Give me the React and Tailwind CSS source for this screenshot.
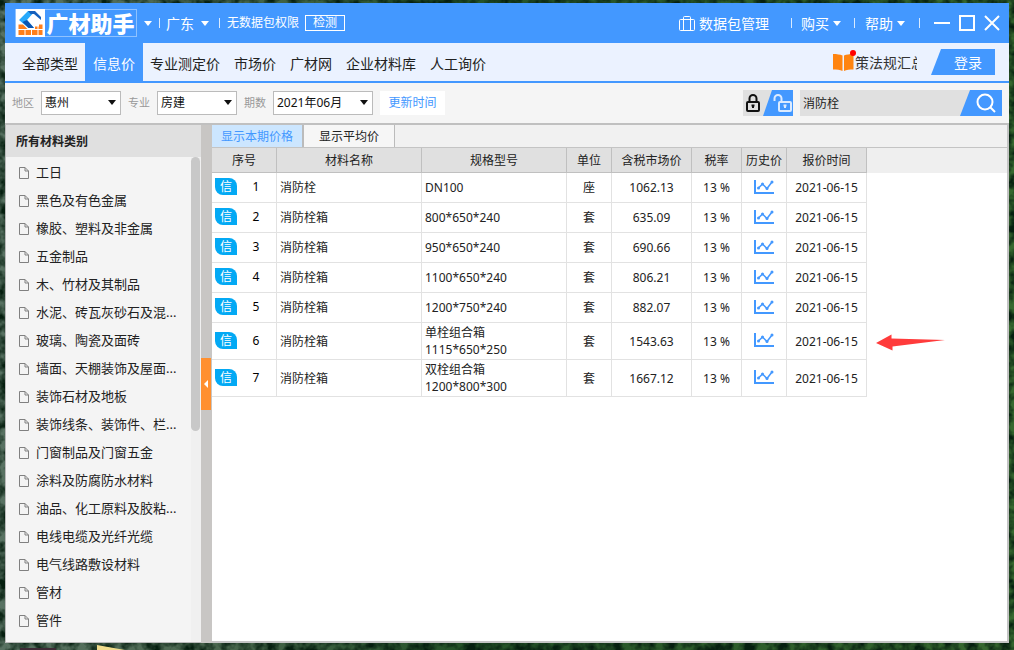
import React, { useState } from 'react';

const NAV_LINKS = ['全部类型', '信息价', '专业测定价', '市场价', '广材网', '企业材料库', '人工询价'];

const CATEGORIES = [
  '工日',
  '黑色及有色金属',
  '橡胶、塑料及非金属',
  '五金制品',
  '木、竹材及其制品',
  '水泥、砖瓦灰砂石及混...',
  '玻璃、陶瓷及面砖',
  '墙面、天棚装饰及屋面...',
  '装饰石材及地板',
  '装饰线条、装饰件、栏...',
  '门窗制品及门窗五金',
  '涂料及防腐防水材料',
  '油品、化工原料及胶粘...',
  '电线电缆及光纤光缆',
  '电气线路敷设材料',
  '管材',
  '管件',
];

const COLUMNS = [
  { title: '序号', width: 'w-[65px]' },
  { title: '材料名称', width: 'w-[145px]' },
  { title: '规格型号', width: 'w-[145px]' },
  { title: '单位', width: 'w-[45px]' },
  { title: '含税市场价', width: 'w-[80px]' },
  { title: '税率', width: 'w-[50px]' },
  { title: '历史价', width: 'w-[45px]' },
  { title: '报价时间', width: 'w-[80px]' },
];

const ROWS = [
  { name: '消防栓', spec: ['DN100'], unit: '座', price: '1062.13' },
  { name: '消防栓箱', spec: ['800*650*240'], unit: '套', price: '635.09' },
  { name: '消防栓箱', spec: ['950*650*240'], unit: '套', price: '690.66' },
  { name: '消防栓箱', spec: ['1100*650*240'], unit: '套', price: '806.21' },
  { name: '消防栓箱', spec: ['1200*750*240'], unit: '套', price: '882.07' },
  { name: '消防栓箱', spec: ['单栓组合箱', '1115*650*250'], unit: '套', price: '1543.63', marked: true },
  { name: '消防栓箱', spec: ['双栓组合箱', '1200*800*300'], unit: '套', price: '1667.12' },
];

const Caret = ({ className = '' }) => (
  <svg className={`shrink-0 ${className}`} width="8" height="5" viewBox="0 0 8 5" fill="currentColor" aria-hidden="true">
    <path d="M0 0h8L4 5z" />
  </svg>
);

const Divider = () => <span className="w-px h-2.5 bg-white/80 shrink-0" />;

const Logo = () => (
  <svg width="29" height="28" viewBox="0 0 29 28" aria-hidden="true">
    <rect width="29" height="28" fill="#fff" />
    <path d="M2.500 15.500H7l5 5h7v-5h7.500V26h-24z" fill="#ff7f1a" />
    <path d="M2 20.500h25M9 20.500V26M15.500 20.500V26M22 20.500V26M22 15.500v5" stroke="#fff" strokeWidth="1" />
    <path d="M12 2h7l-8 9 7 8h-5.500L3 11z" fill="#27a9fb" />
    <path d="M12 2h7l6 6v3l-7-6h-3.500z" fill="#1560bd" />
    <path d="M11 11l7 8h-5.500l-6-6z" fill="#0c55b0" />
    <path d="M16 14h7v3.500h-4.500z" fill="#fff" />
  </svg>
);

const DocIcon = () => (
  <svg className="shrink-0" width="10" height="12" viewBox="0 0 10 12" fill="none" stroke="#808080" aria-hidden="true">
    <path d="M.5.5h5.500l3.500 3.500v7.500h-9zM6 .5V4h3.500" />
  </svg>
);

const TrendIcon = () => (
  <svg className="mx-auto mb-0.5" width="20" height="14" viewBox="0 0 20 14" fill="none" stroke="#4398ff" aria-hidden="true">
    <path d="M1 0v13h19" strokeWidth="2" />
    <path d="M4.500 8l4-4 4.500 4.500L18 2" strokeWidth="1.500" />
    <g fill="#4398ff" stroke="none">
      <circle cx="4.500" cy="8" r="1.500" />
      <circle cx="8.500" cy="4" r="1.500" />
      <circle cx="13" cy="8.500" r="1.500" />
      <circle cx="18" cy="2" r="1.500" />
    </g>
  </svg>
);

const Wallpaper = () => (
  <svg className="absolute inset-0 w-full h-full" aria-hidden="true">
    <defs>
      <linearGradient id="forest">
        <stop offset="0" stopColor="#587262" />
        <stop offset="0.200" stopColor="#4c6850" />
        <stop offset="0.450" stopColor="#245228" />
        <stop offset="1" stopColor="#37682f" />
      </linearGradient>
      <filter id="leaves" x="0" y="0" width="100%" height="100%" colorInterpolationFilters="sRGB">
        <feTurbulence type="fractalNoise" baseFrequency="0.090" numOctaves="3" seed="4" />
        <feColorMatrix values="0 0 0 0 0.020  0 0 0 0 0.120  0 0 0 0 0.060  2.500 0 0 0 -0.800" />
      </filter>
    </defs>
    <rect width="100%" height="100%" fill="url(#forest)" />
    <rect width="100%" height="100%" filter="url(#leaves)" />
    <path d="M20 648h36v2H20z" fill="#3d2a35" />
    <path d="M97 645l28 5H97z" fill="#f0dc8c" />
  </svg>
);

const TitleBar = () => (
  <header className="flex items-center h-10 bg-[#4398ff] text-white pl-2.5 pr-[9px]">
    <a href="#" className="flex items-center h-7 border border-[#8fc2ff]">
      <Logo />
      <span className="w-[91px] text-center text-[22px] leading-6 font-black whitespace-nowrap">广材助手</span>
    </a>
    <Caret className="mx-[7px]" />
    <Divider />
    <button type="button" className="flex items-center gap-[7px] ml-1.5 mr-2.5 text-[14px]">
      广东
      <Caret />
    </button>
    <Divider />
    <span className="ml-[7px] text-[12px]">无数据包权限</span>
    <button type="button" className="ml-1.5 w-10 h-4 border border-white text-[12px] leading-[14px]">检测</button>

    <div className="ml-auto flex items-center text-[14px]">
      <button type="button" className="flex items-center gap-1 mr-[22px]">
        <svg width="16" height="15" viewBox="0 0 16 15" fill="none" stroke="currentColor" aria-hidden="true">
          <rect x=".5" y="3.500" width="15" height="11" rx="1" />
          <path d="M4.500 14.500V1.500a1 1 0 0 1 1-1h5a1 1 0 0 1 1 1v13" />
        </svg>
        数据包管理
      </button>
      <Divider />
      <button type="button" className="flex items-center gap-1 ml-[9px] mr-[13px]">
        购买
        <Caret />
      </button>
      <Divider />
      <button type="button" className="flex items-center gap-1 ml-2.5 mr-3.5">
        帮助
        <Caret />
      </button>
      <Divider />
    </div>
    <div className="flex items-center gap-[9px] ml-3.5">
      <button type="button" aria-label="最小化">
        <svg width="16" height="16" viewBox="0 0 16 16" stroke="#fff" strokeWidth="2"><path d="M0 8h16" /></svg>
      </button>
      <button type="button" aria-label="最大化">
        <svg width="16" height="16" viewBox="0 0 16 16" fill="none" stroke="#fff" strokeWidth="2"><path d="M1 1h14v14H1z" /></svg>
      </button>
      <button type="button" aria-label="关闭">
        <svg width="16" height="16" viewBox="0 0 16 16" stroke="#fff" strokeWidth="2"><path d="M1 1l14 14M15 1L1 15" /></svg>
      </button>
    </div>
  </header>
);

const NavBar = () => {
  const [active, setActive] = useState('信息价');

  return (
    <nav className="flex h-10 bg-[#ebf2ff] border-b-2 border-[#4398ff] pl-2.5 pr-3.5 text-[14px]">
      {NAV_LINKS.map((label) => (
        <a
          key={label}
          href="#"
          onClick={() => setActive(label)}
          className={`flex items-center pt-0.5 whitespace-nowrap ${
            active === label ? 'px-2 bg-[#4398ff] text-white' : 'px-[7px] text-[#222]'
          }`}
        >
          {label}
        </a>
      ))}
      <div className="ml-auto flex items-center">
        <a href="#" className="flex items-center">
          <span className="relative">
            <svg width="21" height="17" viewBox="0 0 21 17" fill="#ff8410" aria-hidden="true">
              <path d="M0 0c4 0 7 .5 9.500 1.500V17C7 15.800 4 15.500 0 15.500zM20.500 0c-4 0-7 .5-9.500 1.500V17c2.500-1.200 5.500-1.500 9.500-1.500z" />
            </svg>
            <span className="absolute -top-1 -right-0.5 w-1.5 h-1.5 rounded-full bg-[#f00]" />
          </span>
          <span className="ml-px w-[62px] overflow-hidden whitespace-nowrap text-[#333]">策法规汇总</span>
        </a>
        <button
          type="button"
          className="ml-3.5 w-16 h-[26px] pl-2.5 bg-[#4398ff] text-white [clip-path:polygon(10px_0,100%_0,100%_100%,0_100%)]"
        >
          登录
        </button>
      </div>
    </nav>
  );
};

const FilterSelect = ({ id, label, value, width }) => (
  <div className="flex items-center">
    <label htmlFor={id} className="mr-[7px] text-[11px] text-[#999]">{label}</label>
    <div className="relative">
      <select
        id={id}
        defaultValue={value}
        className={`block appearance-none h-6 pl-[3px] border border-[#bbb] bg-white text-[12px] text-[#111] ${width}`}
      >
        <option>{value}</option>
      </select>
      <Caret className="absolute right-[5px] top-[9px] pointer-events-none text-[#111]" />
    </div>
  </div>
);

const Toolbar = () => (
  <form className="flex items-center h-10 bg-[#f5f5f5] px-[7px]" onSubmit={(e) => e.preventDefault()}>
    <div className="flex items-center gap-[7px]">
      <FilterSelect id="area" label="地区" value="惠州" width="w-20" />
      <FilterSelect id="major" label="专业" value="房建" width="w-20" />
      <FilterSelect id="period" label="期数" value="2021年06月" width="w-[100px]" />
      <button type="button" className="w-[65px] h-6 bg-white text-[12px] text-[#4398ff]">更新时间</button>
    </div>

    <div className="ml-auto flex h-[26px]">
      <button type="button" aria-label="锁定" className="w-5 bg-[#e0e0e0] flex items-center justify-center">
        <svg width="14" height="18" viewBox="0 0 14 18" fill="none" stroke="#111" strokeWidth="2" aria-hidden="true">
          <rect x="1" y="8" width="12" height="9" rx="1" />
          <path d="M3.500 8V4.500a3.500 3.500 0 0 1 7 0V8" />
          <path d="M7 11v3" />
          <path d="M5.500 11.500h3" />
        </svg>
      </button>
      <span className="w-[30px] bg-[#e0e0e0]">
        <button
          type="button"
          aria-label="解锁"
          className="w-full h-full flex items-center justify-end pr-px bg-[#4398ff] [clip-path:polygon(9px_0,100%_0,100%_100%,0_100%)]"
        >
          <svg width="19" height="18" viewBox="0 0 19 18" fill="none" stroke="#dcebff" strokeWidth="2" aria-hidden="true">
            <rect x="6" y="8" width="12" height="9" rx="1" />
            <path d="M8.500 8V4.500a3.500 3.500 0 0 0-7 0V7" />
            <path d="M12 11v3M10.500 11.500h3" />
          </svg>
        </button>
      </span>
      <div className="ml-[7px] flex bg-[#e0e0e0]">
        <input
          type="text"
          aria-label="搜索"
          defaultValue="消防栓"
          className="w-40 px-[3px] pt-0.5 text-[12px] text-[#222] outline-none"
        />
        <button
          type="submit"
          aria-label="查询"
          className="w-[42px] flex items-center justify-center pl-2.5 bg-[#4398ff] [clip-path:polygon(10px_0,100%_0,100%_100%,0_100%)]"
        >
          <svg width="20" height="20" viewBox="0 0 20 20" fill="none" stroke="#fff" strokeWidth="2" aria-hidden="true">
            <circle cx="9" cy="9" r="7.500" />
            <path d="M14.500 14.500L19 19" />
          </svg>
        </button>
      </div>
    </div>
  </form>
);

const Sidebar = () => (
  <aside className="flex flex-col w-[196px] shrink-0 border-l border-b border-[#bbb] bg-[#f4f4f4]">
    <h2 className="h-8 pl-2.5 pt-0.5 flex items-center shrink-0 bg-[#e0e0e0] text-[12px] font-bold text-[#222]">所有材料类别</h2>
    <div className="flex flex-1 min-h-0">
      <ul className="flex-1 min-w-0 pt-0.5 overflow-hidden">
        {CATEGORIES.map((name) => (
          <li key={name}>
            <a href="#" className="flex items-center gap-[7px] h-7 pl-[13px] text-[13px] text-[#222] whitespace-nowrap">
              <DocIcon />
              {name}
            </a>
          </li>
        ))}
      </ul>
      <div className="w-2.5 shrink-0 pr-px bg-[#f0f0f0]">
        <div className="h-[274px] rounded-full bg-[#c8c8c8]" />
      </div>
    </div>
  </aside>
);

const PriceTable = () => (
  <table className="table-fixed w-[655px] border-separate border-spacing-0 text-[12px] leading-[17px] text-[#222]">
    <thead>
      <tr>
        {COLUMNS.map((col) => (
          <th
            key={col.title}
            className={`h-[25px] p-0 font-normal whitespace-nowrap bg-[#e0e0e0] border-r border-b border-[#c0c0c0] ${col.width}`}
          >
            {col.title}
          </th>
        ))}
      </tr>
    </thead>
    <tbody className="text-center [&_td]:border-r [&_td]:border-b [&_td]:border-[#e2e2e2] [&_td]:p-0">
      {ROWS.map((row, i) => (
        <tr key={row.price} className={row.spec.length > 1 ? 'h-[37px]' : 'h-[30px]'}>
          <td>
            <div className="flex items-center pl-[3px] pb-0.5">
              <span className="w-[22px] h-[17px] rounded-tr-lg rounded-bl-lg bg-[#03a9f4] text-white">信</span>
              <span className="w-[38px] text-black">{i + 1}</span>
            </div>
          </td>
          <td><div className="pl-[3px] text-left">{row.name}</div></td>
          <td>
            <div className="pl-[3px] text-left">
              {row.spec.map((line) => <div key={line}>{line}</div>)}
            </div>
          </td>
          <td>{row.unit}</td>
          <td>{row.price}</td>
          <td>13 %</td>
          <td><TrendIcon /></td>
          <td className="relative">
            2021-06-15
            {row.marked && (
              <svg className="absolute left-full top-2.5 ml-2.5" width="69" height="18" viewBox="0 0 69 18" fill="#ff3b3b" aria-hidden="true">
                <path d="M0 10L15.500 1.500V5.500L69 7 16.500 13.500V17.500z" />
              </svg>
            )}
          </td>
        </tr>
      ))}
    </tbody>
  </table>
);

const PricePanel = () => {
  const [tab, setTab] = useState('current');
  const tabs = [
    { key: 'current', label: '显示本期价格' },
    { key: 'average', label: '显示平均价' },
  ];

  return (
    <section className="flex-1 min-w-0 bg-white border-r-2 border-b-2 border-[#c4c4c4]">
      <div className="flex h-[23px] bg-[#f1f1f1] border-b border-[#c4c4c4]">
        {tabs.map(({ key, label }) => (
          <button
            key={key}
            type="button"
            onClick={() => setTab(key)}
            className={`pt-0.5 border-[#bbb] text-[12px] whitespace-nowrap ${
              tab === key ? 'w-[92px] border-r-2 bg-[#cce6ff] text-[#4398ff]' : 'w-[91px] border-r bg-[#f6f6f6] text-[#222]'
            }`}
          >
            {label}
          </button>
        ))}
      </div>
      <div className="bg-[linear-gradient(#efefef_25px,transparent_25px)]">
        <PriceTable />
      </div>
    </section>
  );
};

export default function App() {
  return (
    <div className="relative h-screen overflow-hidden pt-[3px] px-[5px] pb-[7px] font-['Noto_Sans','Noto_Sans_CJK_SC',sans-serif]">
      <Wallpaper />
      <main className="relative flex flex-col h-full bg-[#f5f5f5]">
        <TitleBar />
        <NavBar />
        <Toolbar />
        <div className="flex flex-1 min-h-0 border-t-2 border-[#c0c0c0]">
          <Sidebar />
          <div className="flex items-center w-[11px] shrink-0 bg-[#c8c6c4]">
            <button type="button" aria-label="收起" className="w-2.5 h-[52px] flex items-center justify-center bg-[#ff9030]">
              <svg width="4" height="8" viewBox="0 0 4 8" fill="#fff"><path d="M4 0v8L0 4z" /></svg>
            </button>
          </div>
          <PricePanel />
        </div>
      </main>
    </div>
  );
}
